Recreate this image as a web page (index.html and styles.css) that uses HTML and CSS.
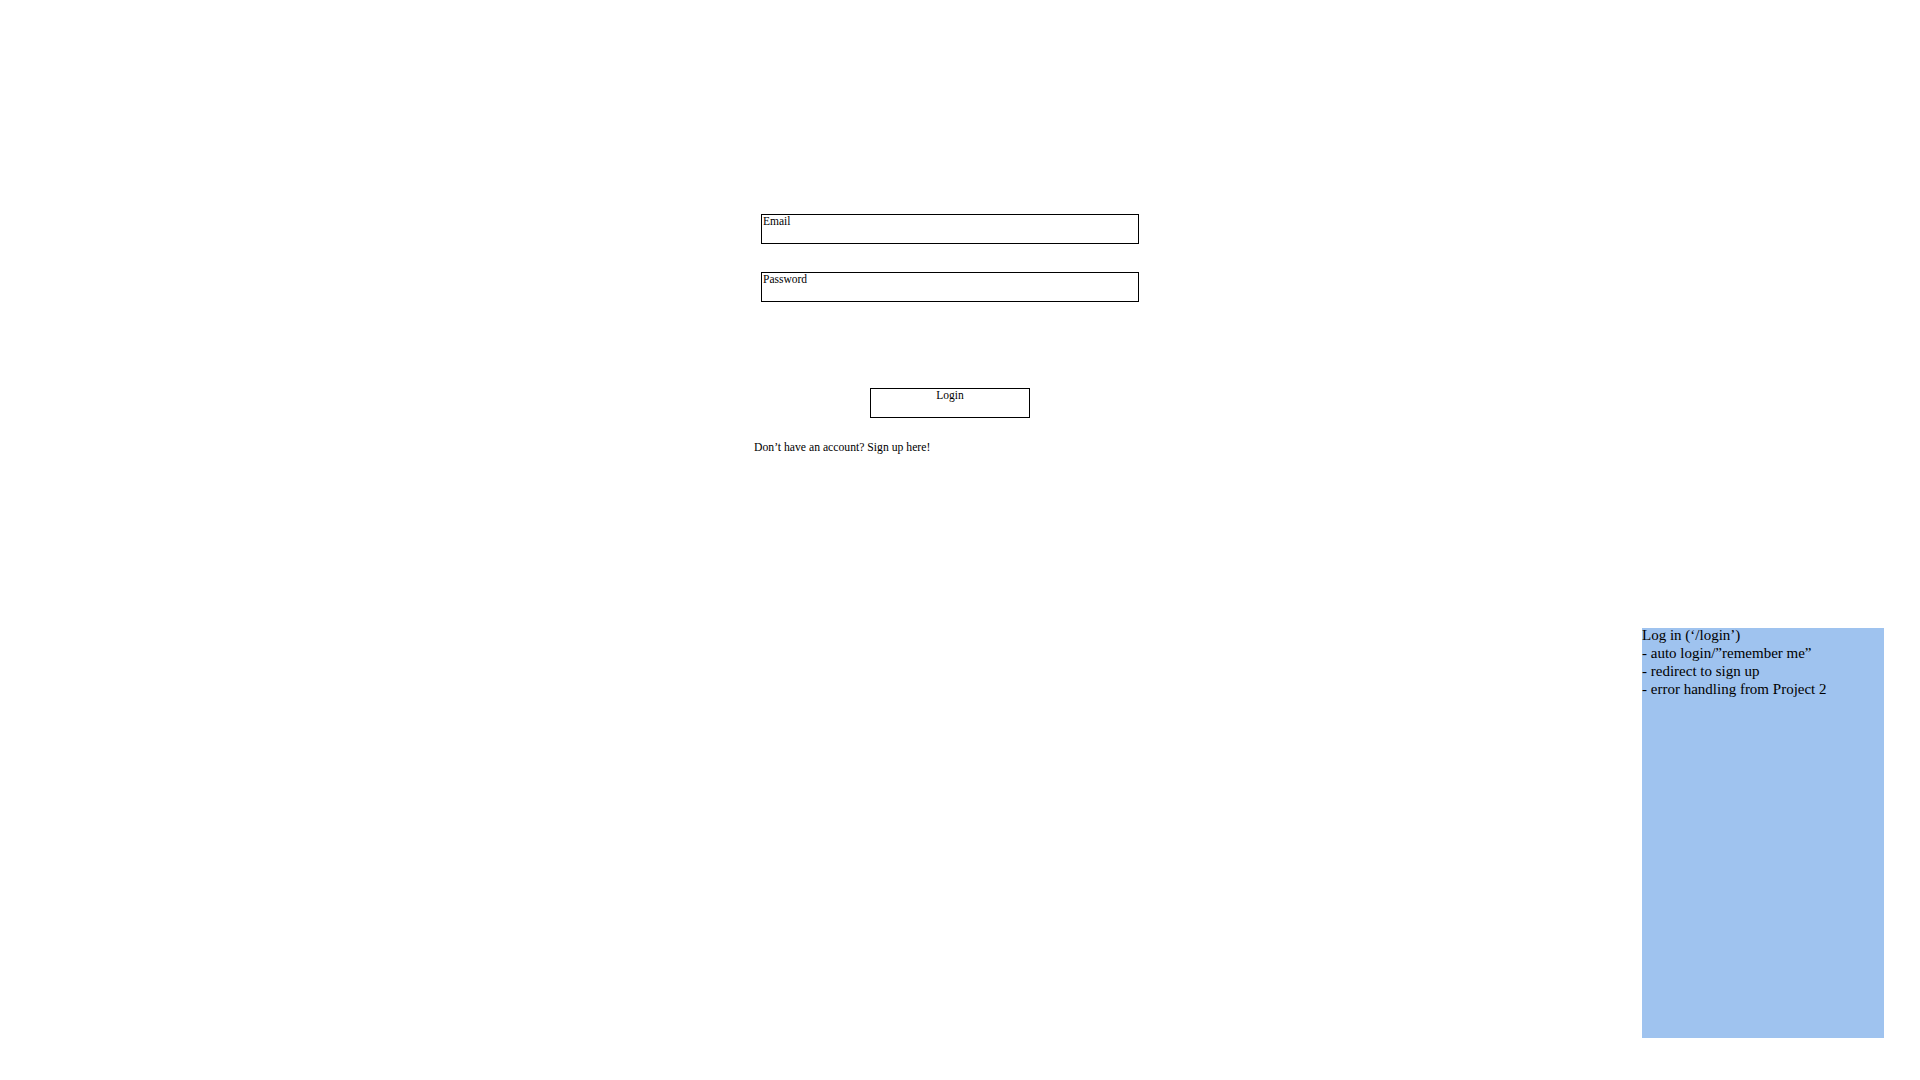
FILE: index.html
```html
<!DOCTYPE html>
<html lang="en">
<head>
<meta charset="utf-8">
<title>Log in</title>
<link rel="stylesheet" href="styles.css">
</head>
<body>
<div class="canvas">
  <main class="login">
    <form class="login-form">
      <div class="field"><span class="field-label">Email</span></div>
      <div class="field field-password"><span class="field-label">Password</span></div>
      <div class="actions">
        <button type="button" class="login-btn">Login</button>
      </div>
      <p class="signup">Don’t have an account? Sign up here!</p>
    </form>
  </main>
  <aside class="note">
    <div class="note-text">
      <div>Log in (‘/login’)</div>
      <div>- auto login/”remember me”</div>
      <div>- redirect to sign up</div>
      <div>- error handling from Project 2</div>
    </div>
  </aside>
</div>
</body>
</html>
```

FILE: styles.css
```css
html, body {
  margin: 0;
  padding: 0;
  background: #ffffff;
}

body {
  font-family: "Liberation Serif", "Times New Roman", serif;
  color: #000000;
}

.canvas {
  position: relative;
  width: 1920px;
  height: 1080px;
  overflow: hidden;
}

.login {
  padding-top: 214px;
  padding-left: 761px;
}

.login-form {
  width: 378px;
  display: flex;
  flex-direction: column;
  margin: 0;
}

.field {
  box-sizing: border-box;
  height: 30px;
  border: 1px solid #000000;
  padding: 0 1px;
  display: flex;
  align-items: flex-start;
}

.field-password {
  margin-top: 28px;
}

.field-label {
  font-size: 11.5px;
  line-height: 13px;
}

.actions {
  margin-top: 86px;
  display: flex;
  justify-content: center;
}

.login-btn {
  box-sizing: border-box;
  width: 160px;
  height: 30px;
  border: 1px solid #000000;
  background: #ffffff;
  padding: 0;
  margin: 0;
  font-family: "Liberation Serif", "Times New Roman", serif;
  font-size: 11.5px;
  line-height: 13px;
  color: #000000;
  display: flex;
  justify-content: center;
  align-items: flex-start;
}

.signup {
  margin: 23px 0 0 -7px;
  font-size: 11.7px;
  line-height: 13px;
  white-space: nowrap;
}

.note {
  position: absolute;
  left: 1642px;
  top: 628px;
  width: 242px;
  height: 410px;
  background: #9fc3ef;
  font-size: 15px;
  line-height: 18px;
  color: #000000;
}

.note-text {
  margin-top: -2px;
}
```
